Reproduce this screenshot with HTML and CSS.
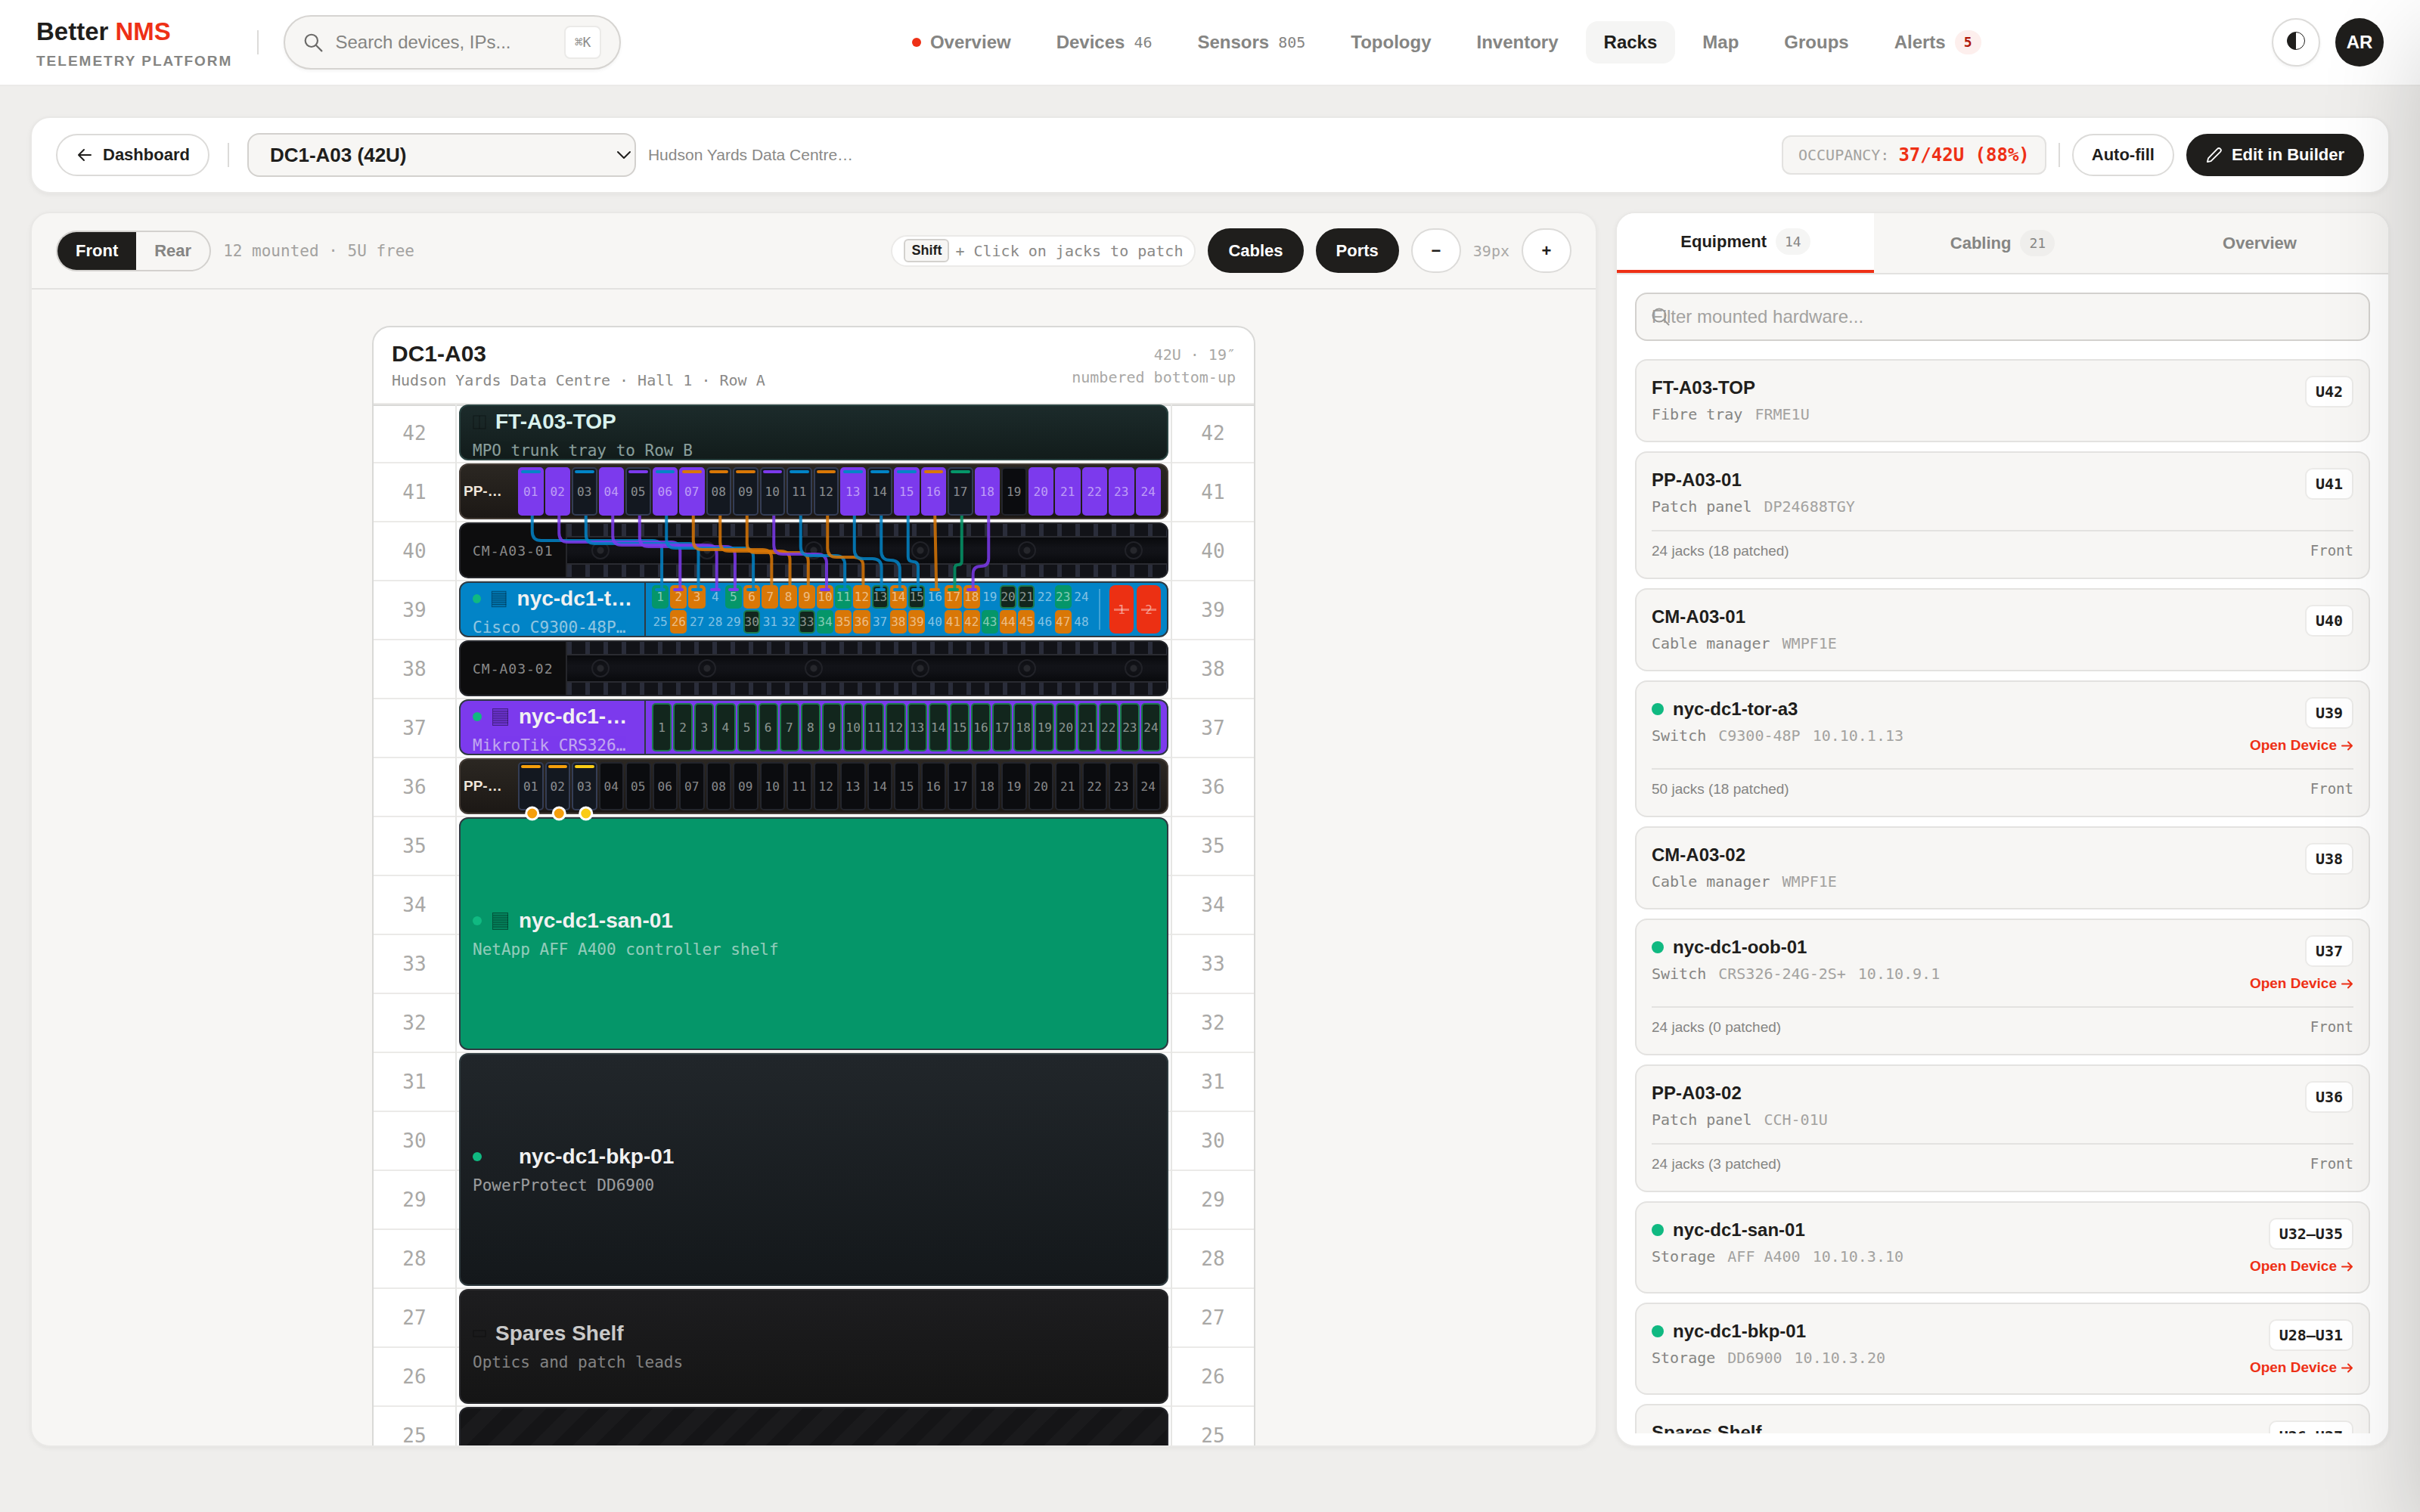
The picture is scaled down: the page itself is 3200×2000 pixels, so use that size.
FILE: index.html
```html
<!DOCTYPE html>
<html lang="en">
<head>
  <meta charset="UTF-8">
  <meta name="viewport" content="width=device-width, initial-scale=1.0">
  <title>Better NMS - Racks</title>
  <link rel="stylesheet" href="styles.css">
</head>
<body>
  <header class="topbar">
    <div class="topbar-left">
      <a class="brand" href="#">
        <span class="brand-name">Better <em>NMS</em></span>
        <span class="brand-sub">TELEMETRY PLATFORM</span>
      </a>
      <span class="divider"></span>
      <label class="search">
        <svg class="icon" viewBox="0 0 24 24"><circle cx="10" cy="10" r="7.5"/><path d="M15.5 15.5 22.5 22.5"/></svg>
        <input type="text" placeholder="Search devices, IPs..." aria-label="Search">
        <kbd>⌘K</kbd>
      </label>
    </div>

    <nav class="nav">
      <a href="#"><i class="dot-red"></i>Overview</a>
      <a href="#">Devices <span class="count">46</span></a>
      <a href="#">Sensors <span class="count">805</span></a>
      <a href="#">Topology</a>
      <a href="#">Inventory</a>
      <a href="#" class="active" aria-current="page">Racks</a>
      <a href="#">Map</a>
      <a href="#">Groups</a>
      <a href="#">Alerts <span class="alert-count">5</span></a>
    </nav>

    <div class="topbar-right">
      <button class="round" aria-label="Toggle theme">
        <svg viewBox="0 0 24 24"><circle cx="12" cy="12" r="11.500" fill="none" stroke="#1f1e1c"/><path d="M12 .5a11.500 11.500 0 0 0 0 23z" fill="#1f1e1c"/></svg>
      </button>
      <button class="avatar">AR</button>
    </div>
  </header>

  <main class="page">
    <section class="card toolbar">
      <div class="toolbar-left">
        <a class="btn" href="#">
          <svg class="icon arrow" viewBox="0 0 24 20"><path d="M20 10H4M11 3l-7 7 7 7"/></svg>
          Dashboard
        </a>
        <span class="divider"></span>
        <div class="rack-pick">
          <select aria-label="Rack">
            <option>DC1-A03 (42U)</option>
          </select>
          <svg class="icon chevron" viewBox="0 0 20 20"><path d="m2 6 8 8 8-8"/></svg>
          <span class="site">Hudson Yards Data Centre…</span>
        </div>
      </div>
      <div class="toolbar-right">
        <div class="occupancy">OCCUPANCY: <strong>37/42U (88%)</strong></div>
        <span class="divider"></span>
        <button class="btn">Auto-fill</button>
        <button class="btn dark">
          <svg class="icon pencil" viewBox="0 0 24 24"><path d="M16.5 3.2a2.9 2.9 0 0 1 4.2 4.2L7.2 20.8 2 22l1.3-5.200z"/></svg>
          Edit in Builder
        </button>
      </div>
    </section>

    <div class="columns">
      <section class="card rack-panel">
        <div class="rack-bar">
          <div class="rack-bar-left">
            <div class="segment">
              <button class="on">Front</button>
              <button>Rear</button>
            </div>
            <span class="mounted">12 mounted · 5U free</span>
          </div>
          <div class="rack-bar-right">
            <div class="hint"><kbd>Shift</kbd>+ Click on jacks to patch</div>
            <button class="btn tall dark">Cables</button>
            <button class="btn tall dark">Ports</button>
            <button class="btn tall zoom">−</button>
            <span class="zoom-size">39px</span>
            <button class="btn tall zoom">+</button>
          </div>
        </div>

        <div class="rack-scroll">
          <div class="rack">
            <div class="rack-head">
              <div>
                <h2>DC1-A03</h2>
                <p>Hudson Yards Data Centre · Hall 1 · Row A</p>
              </div>
              <p class="rack-meta">42U · 19″<br>numbered bottom-up</p>
            </div>
            <div class="rack-body">
              <div class="gutter"></div>
              <div class="slots" id="slots">
                <svg class="cables" id="cables"></svg>
              </div>
              <div class="gutter"></div>
            </div>
          </div>
        </div>
      </section>

      <aside class="card side">
        <div class="tabs">
          <button class="on">Equipment <span>14</span></button>
          <button>Cabling <span>21</span></button>
          <button>Overview</button>
        </div>
        <div class="side-body">
          <label class="filter">
            <svg class="icon" viewBox="0 0 24 24"><circle cx="10" cy="10" r="8.5"/><path d="M16.500 16.500 22.500 22.500"/></svg>
            <input type="text" placeholder="Filter mounted hardware..." aria-label="Filter mounted hardware">
          </label>
          <div class="list" id="list"></div>
        </div>
      </aside>
    </div>
  </main>

  <div class="drawer"></div>

  <script src="script.js"></script>
</body>
</html>
```
FILE: styles.css
```css
* {
  box-sizing: border-box;
}

body {
  margin: 0;
  height: 100vh;
  display: flex;
  flex-direction: column;
  overflow: hidden;
  background: #efeeec;
  color: #1f1e1c;
  font-family: "Liberation Sans", Arial, sans-serif;
  font-size: 22px;
}

button, input, select {
  font: inherit;
  color: inherit;
}

button {
  cursor: pointer;
}

a {
  color: inherit;
  text-decoration: none;
}

h2, h3, p {
  margin: 0;
}

kbd, .count, .alert-count, .occupancy, .mounted, .zoom-size, .hint,
.rack-head p, .gutter, .unit p, .port, .cm-label, .tabs span,
.item-sub, .item-u, .item-side {
  font-family: "DejaVu Sans Mono", "Liberation Mono", monospace;
}

.icon {
  fill: none;
  stroke: currentColor;
  stroke-width: 2;
  stroke-linecap: round;
  stroke-linejoin: round;
  flex: none;
}

.divider {
  width: 2px;
  height: 32px;
  background: #dcdbd9;
}

/* top bar */
.topbar {
  display: flex;
  align-items: center;
  justify-content: space-between;
  height: 114px;
  padding: 0 48px;
  background: #fff;
  border-bottom: 2px solid #ebeae8;
  flex: none;
}

.topbar-left, .topbar-right, .nav {
  display: flex;
  align-items: center;
}

.brand {
  display: flex;
  flex-direction: column;
  margin-right: 33px;
  padding-top: 4px;
}

.brand-name {
  font-size: 33px;
  font-weight: bold;
  line-height: 38px;
}

.brand-name em {
  font-style: normal;
  color: #ee3016;
}

.brand-sub {
  margin-top: 8px;
  font-size: 19px;
  font-weight: bold;
  line-height: 24px;
  letter-spacing: 2px;
  color: #858583;
}

.search {
  display: flex;
  align-items: center;
  width: 446px;
  height: 72px;
  margin-left: 33px;
  padding: 0 24px;
  background: #f7f6f4;
  border: 2px solid #d6d4d1;
  border-radius: 36px;
  box-shadow: 0 2px 4px rgba(0, 0, 0, 0.05);
}

.search .icon {
  width: 26px;
  height: 26px;
  color: #6b6a68;
}

.search input {
  flex: 1;
  min-width: 0;
  margin-left: 16px;
  padding: 0;
  border: 0;
  outline: 0;
  background: none;
  font-size: 24px;
}

.search input::placeholder {
  color: #858583;
}

.search kbd {
  padding: 0 12px;
  font-size: 18px;
  line-height: 40px;
  color: #8f8e8c;
  background: #fff;
  border: 2px solid #ebeae8;
  border-radius: 8px;
}

.nav {
  gap: 12px;
}

.nav a {
  display: flex;
  align-items: center;
  gap: 12px;
  height: 56px;
  padding: 0 24px;
  border-radius: 16px;
  font-size: 24px;
  font-weight: bold;
  color: #858583;
}

.nav a.active {
  color: #1f1e1c;
  background: #f5f5f4;
}

.dot-red {
  width: 12px;
  height: 12px;
  border-radius: 50%;
  background: #ee3016;
}

.count {
  font-size: 20px;
  font-weight: normal;
}

.alert-count {
  padding: 0 12px;
  font-size: 18px;
  line-height: 32px;
  color: #b0180a;
  background: #fdefed;
  border-radius: 16px;
}

.topbar-right {
  gap: 20px;
}

.round, .avatar {
  display: flex;
  align-items: center;
  justify-content: center;
  width: 64px;
  height: 64px;
  padding: 0;
  border-radius: 50%;
}

.round {
  padding-bottom: 4px;
  background: #fff;
  border: 2px solid #dcdbd9;
  box-shadow: 0 2px 4px rgba(0, 0, 0, 0.05);
}

.round svg {
  width: 24px;
  height: 24px;
}

.avatar {
  border: 0;
  background: #1f1e1c;
  color: #fff;
  font-size: 24px;
  font-weight: bold;
}

/* page */
.page {
  flex: 1;
  min-height: 0;
  display: flex;
  flex-direction: column;
  gap: 24px;
  padding: 40px 40px 86px;
}

.card {
  background: #fff;
  border: 2px solid #e9e8e6;
  border-radius: 26px;
  box-shadow: 0 2px 6px rgba(0, 0, 0, 0.05);
}

.toolbar {
  display: flex;
  align-items: center;
  justify-content: space-between;
  height: 102px;
  padding: 0 32px;
  flex: none;
}

.toolbar-left, .toolbar-right, .rack-pick {
  display: flex;
  align-items: center;
}

.toolbar-left {
  gap: 24px;
}

.toolbar-right, .rack-pick {
  gap: 16px;
}

.btn {
  display: flex;
  align-items: center;
  gap: 12px;
  height: 56px;
  padding: 0 24px;
  background: #fff;
  border: 2px solid #dcdbd9;
  border-radius: 30px;
  font-size: 22px;
  font-weight: bold;
}

.btn.dark {
  background: #1f1e1c;
  border-color: #1f1e1c;
  color: #fff;
}

.btn.tall {
  height: 59px;
}

.arrow {
  width: 24px;
  height: 20px;
}

.pencil {
  width: 22px;
  height: 22px;
}

.rack-pick {
  position: relative;
}

.rack-pick select {
  appearance: none;
  width: 514px;
  height: 58px;
  padding: 0 28px;
  background: #f7f6f4;
  border: 2px solid #d3d1ce;
  border-radius: 16px;
  font-size: 26px;
  font-weight: bold;
}

.chevron {
  position: absolute;
  left: 488px;
  width: 20px;
  height: 20px;
  pointer-events: none;
}

.site {
  font-size: 21px;
  color: #8a8987;
}

.occupancy {
  display: flex;
  align-items: center;
  gap: 12px;
  height: 52px;
  padding: 0 20px;
  background: #f7f6f4;
  border: 2px solid #e3e2e0;
  border-radius: 12px;
  font-size: 20px;
  color: #a3a2a0;
}

.occupancy strong {
  font-size: 24px;
  color: #ee3016;
}

.columns {
  flex: 1;
  min-height: 0;
  display: grid;
  grid-template-columns: minmax(0, 1fr) 1024px;
  gap: 24px;
}

/* rack panel */
.rack-panel {
  display: flex;
  flex-direction: column;
  min-height: 0;
  overflow: hidden;
  background: #f7f6f4;
}

.rack-bar {
  display: flex;
  align-items: center;
  justify-content: space-between;
  padding: 20px 32px;
  border-bottom: 2px solid #e3e2e0;
}

.rack-bar-left, .rack-bar-right {
  display: flex;
  align-items: center;
  gap: 16px;
}

.rack-bar .btn {
  padding: 0 25px;
}

.segment {
  display: flex;
  overflow: hidden;
  height: 54px;
  border: 2px solid #d3d1ce;
  border-radius: 27px;
}

.segment button {
  padding: 0 24px;
  border: 0;
  background: none;
  font-weight: bold;
  color: #858583;
}

.segment .on {
  background: #1f1e1c;
  color: #fff;
}

.mounted {
  font-size: 21px;
  color: #a3a2a0;
}

.hint {
  display: flex;
  align-items: center;
  gap: 8px;
  height: 42px;
  padding: 0 15px;
  background: #fff;
  border: 2px solid #ebeae8;
  border-radius: 21px;
  font-size: 20px;
  color: #8a8987;
}

.hint kbd {
  padding: 0 8px;
  background: #f7f6f4;
  border: 2px solid #d3d1ce;
  border-radius: 6px;
  font-family: "Liberation Sans", Arial, sans-serif;
  font-size: 18px;
  font-weight: bold;
  line-height: 27px;
  color: #1f1e1c;
}

.rack-bar .zoom {
  justify-content: center;
  width: 66px;
  padding: 0;
}

.zoom-size {
  font-size: 20px;
  color: #a9a8a6;
}

.rack-scroll {
  flex: 1;
  min-height: 0;
  overflow: auto;
  scrollbar-width: none;
  padding: 48px;
}

.rack {
  max-width: 1168px;
  margin: 0 auto;
  background: #fff;
  border: 2px solid #d9d9d7;
  border-radius: 24px;
}

.rack-head {
  display: flex;
  align-items: center;
  justify-content: space-between;
  padding: 19px 24px 17px;
  border-bottom: 2px solid #ebeae8;
}

.rack-head h2 {
  margin-bottom: 6px;
  font-size: 30px;
  line-height: 32px;
}

.rack-head p {
  font-size: 20px;
  line-height: 26px;
  color: #8a8987;
}

.rack-head .rack-meta {
  line-height: 30px;
  text-align: right;
  color: #a9a8a6;
}

.rack-body {
  display: grid;
  grid-template-columns: 108px minmax(0, 1fr) 108px;
  box-shadow: inset 0 2px #d9d9d7;
}

.gutter span {
  display: flex;
  align-items: center;
  justify-content: center;
  height: 78px;
  border-bottom: 2px solid #ebeae8;
  font-size: 26px;
  color: #a9a8a6;
}

.slots {
  position: relative;
  display: grid;
  grid-auto-rows: 78px;
  border: solid #e6e6e4;
  border-width: 0 2px;
  background: repeating-linear-gradient(transparent 0 76px, #ebeae8 76px 78px);
}

.cables {
  position: absolute;
  left: 0;
  top: 0;
  width: 100%;
  height: 100%;
  pointer-events: none;
  fill: none;
  stroke-width: 4;
  z-index: 1;
}

/* rack units */
.unit {
  display: flex;
  overflow: hidden;
  margin: 0 3px 4px;
  border: 2px solid #2f3a42;
  border-radius: 12px;
  color: #f1f1f1;
}

.face {
  display: flex;
  flex-direction: column;
  justify-content: safe center;
  padding: 2px 16px;
  white-space: nowrap;
}

.face h3 {
  display: flex;
  align-items: center;
  gap: 12px;
  margin-bottom: 4px;
  font-size: 28px;
  line-height: 38px;
}

.face p {
  font-size: 21px;
  line-height: 30px;
  opacity: 0.6;
}

.led {
  width: 12px;
  height: 12px;
  border-radius: 50%;
  background: #10b981;
}

.kind {
  width: 25px;
  height: 24px;
  fill: none;
  stroke: rgba(0, 0, 0, 0.4);
  stroke-width: 1;
}

.kind.small {
  width: 18px;
}

.tray {
  background: linear-gradient(#1c2b2b, #121c1b);
  border-color: #2b4442;
  color: #d9f2ee;
}

.panel {
  background: linear-gradient(#2b2722, #1c1815);
  border-color: #453d37;
}

.manager {
  background: #0d0d0e;
  border-color: #25262b;
}

.blue {
  background: #0284c7;
}

.purple {
  background: #7c3aed;
}

.green {
  background: #059669;
}

.backup {
  background: linear-gradient(#21262a, #14181b);
  border-color: #303c40;
}

.shelf {
  background: linear-gradient(#1d1d1f, #151515);
  border-color: #2a2a2d;
  color: #c9c9c9;
}

.blank {
  background: repeating-linear-gradient(135deg, #151517 0 20px, #1a1a1c 20px 40px);
  border-color: #25262b;
}

.switch .face {
  width: 245px;
  border-right: 2px solid #2f3a42;
}

.panel-label {
  display: flex;
  align-items: center;
  width: 76px;
  padding-left: 4px;
  font-size: 19px;
  font-weight: bold;
  color: #efe6dc;
}

.ports {
  flex: 1;
  display: grid;
  grid-template-columns: repeat(24, minmax(0, 1fr));
  gap: 2px;
  padding: 3px 8px 3px 0;
}

.switch .ports {
  padding-left: 8px;
}

.port {
  position: relative;
  display: flex;
  align-items: center;
  justify-content: center;
  min-width: 0;
  padding: 0;
  border: 2px solid transparent;
  border-radius: 5px;
  background: none;
  font-size: 16px;
  color: rgba(255, 255, 255, 0.52);
}

.port.empty {
  background: #0b0c0f;
  border-color: #23252c;
}

.port.patched {
  background: #131820;
  border-color: #343d55;
}

.port.up {
  background: #12261d;
  border-color: #1c7a4e;
}

.port.g {
  background: #059669;
}

.port.o {
  background: #d97706;
}

.port.p {
  background: #7c3aed;
  border-color: #7c3aed;
}

.port i {
  position: absolute;
  top: 2px;
  left: 2px;
  right: 2px;
  height: 4px;
  border-radius: 2px;
}

.uplinks {
  display: flex;
  gap: 4px;
  margin: 3px 8px 3px 4px;
}

.uplinks::before {
  content: "";
  width: 2px;
  margin: 5px 8px 5px 0;
  background: rgba(255, 255, 255, 0.25);
}

.uplinks .port {
  width: 32px;
  background: #ec3013;
  border-radius: 8px;
}

.uplinks .port::after {
  content: "";
  position: absolute;
  width: 20px;
  height: 3px;
  background: rgba(255, 255, 255, 0.35);
}

.cm-label {
  display: flex;
  align-items: center;
  width: 141px;
  padding-left: 16px;
  border-right: 2px solid #25262b;
  font-size: 18px;
  letter-spacing: 1px;
  color: #8a8a8a;
}

.cm-duct {
  flex: 1;
  display: flex;
  flex-direction: column;
}

.fingers {
  height: 16px;
  background: repeating-linear-gradient(90deg, #2a2d3a 0 6px, #121318 6px 24px);
}

.cm-mid {
  flex: 1;
  display: flex;
  align-items: center;
  justify-content: space-between;
  padding: 0 32px;
  border: solid #2a2b31;
  border-width: 2px 0;
  background: linear-gradient(#090a0d, #121318 40%, #111217 60%, #090a0d);
}

.cm-mid span {
  width: 24px;
  height: 24px;
  border: 2px solid #212228;
  border-radius: 50%;
  background: radial-gradient(circle, #26272c 4px, transparent 5px);
}

/* equipment list */
.side {
  display: flex;
  flex-direction: column;
  min-height: 0;
  overflow: hidden;
}

.tabs {
  display: grid;
  grid-template-columns: repeat(3, 1fr);
  height: 81px;
  background: #f7f6f4;
  border-bottom: 2px solid #e3e2e0;
  flex: none;
}

.tabs button {
  display: flex;
  align-items: center;
  justify-content: center;
  gap: 12px;
  border: 0;
  background: none;
  font-weight: bold;
  color: #858583;
}

.tabs .on {
  background: #fff;
  border-bottom: 4px solid #ee3016;
  color: #1f1e1c;
}

.tabs span {
  padding: 0 12px;
  background: #efeeec;
  border-radius: 18px;
  font-size: 18px;
  font-weight: normal;
  line-height: 35px;
  color: #858583;
}

.tabs .on span {
  background: #f5f5f4;
}

.side-body {
  flex: 1;
  min-height: 0;
  display: flex;
  flex-direction: column;
  gap: 24px;
  padding: 24px 24px 16px;
}

.filter {
  position: relative;
  flex: none;
}

.filter input {
  width: 100%;
  height: 64px;
  padding: 0 20px;
  background: #f7f6f4;
  border: 2px solid #d3d1ce;
  border-radius: 16px;
  font-size: 24px;
}

.filter input::placeholder {
  color: #a3a2a0;
}

.filter .icon {
  position: absolute;
  left: 22px;
  top: 20px;
  width: 24px;
  height: 24px;
  color: #9a9997;
}

.list {
  display: flex;
  flex-direction: column;
  gap: 12px;
  min-height: 0;
  overflow: hidden;
}

.item {
  flex: none;
  padding: 20px;
  background: #f7f6f4;
  border: 2px solid #e3e2e0;
  border-radius: 16px;
}

.item-top, .item-foot {
  display: flex;
  justify-content: space-between;
}

.item h3 {
  display: flex;
  align-items: center;
  gap: 12px;
  font-size: 24px;
  line-height: 32px;
}

.item h3 i {
  width: 16px;
  height: 16px;
  border-radius: 50%;
  background: #10b981;
}

.item-sub {
  display: flex;
  gap: 16px;
  margin-top: 6px;
  padding-bottom: 2px;
  font-size: 20px;
  line-height: 26px;
  color: #a3a2a0;
}

.item-sub span:first-child {
  color: #858583;
}

.item-right {
  display: flex;
  flex-direction: column;
  align-items: flex-end;
  gap: 8px;
}

.item-u {
  padding: 0 12px;
  background: #fff;
  border: 2px solid #ebeae8;
  border-radius: 10px;
  font-size: 20px;
  font-weight: bold;
  line-height: 38px;
}

.open {
  display: flex;
  align-items: center;
  gap: 5px;
  font-size: 19px;
  font-weight: bold;
  line-height: 28px;
  color: #ee3016;
}

.open svg {
  width: 17px;
  height: 17px;
}

.item-foot {
  margin-top: 16px;
  padding: 11px 0 1px;
  border-top: 2px solid #e3e2e0;
  font-size: 19px;
  line-height: 29px;
  color: #858583;
}

.drawer {
  position: fixed;
  top: 0;
  left: 100%;
  width: 800px;
  height: 100vh;
  pointer-events: none;
  box-shadow: 0 48px 120px rgba(0, 0, 0, 0.18);
}
```
FILE: script.js
```js
const TOP_U = 42;
const LAST_U = 25;
const BLUE = "#0284c7", PURPLE = "#7c3aed", ORANGE = "#d97706", GREEN = "#059669";

// cable i runs from patch panel jack i+1 to switch port i+1
const cableColors = [BLUE, PURPLE, BLUE, PURPLE, PURPLE, BLUE, ORANGE, ORANGE, ORANGE,
  PURPLE, BLUE, ORANGE, BLUE, BLUE, BLUE, ORANGE, GREEN, PURPLE];
const strayColors = ["#f59e0b", "#f59e0b", "#facc15"];

// one letter per port: p/o/g = vlan colour, u = link up, x = patched, e = empty, . = none
const panel1 = "ppxpxppxxxxxpxppxpeppppp";
const panel2 = "xxx" + "e".repeat(21);
const torPorts = "goo.gooooogouou.oo.uu.g." + ".o...u..ugoo.oo.oogoo.o.";
const oobPorts = "u".repeat(24);
const portClass = { p: "p", o: "o", g: "g", u: "up", x: "patched", e: "empty", ".": "" };

const serverIcon = '<svg class="kind" viewBox="0 0 25 24"><rect x="2.500" y="1.500" width="20" height="22" fill="rgba(0,0,0,.12)"/><path d="M3 5h20M3 8h20M3 11h20M3 14h20M3 17h20M3 20h20"/></svg>';
const trayIcon = '<svg class="kind small" viewBox="0 0 18 24"><rect x="1" y="4" width="16" height="17"/><path d="M9 4v17"/></svg>';
const shelfIcon = '<svg class="kind small" viewBox="0 0 18 24"><rect x="1" y="8" width="16" height="8"/></svg>';
const hiddenIcon = '<svg class="kind" viewBox="0 0 25 24"></svg>';
const led = '<i class="led"></i>';

function ports(spec, ticks, pad) {
  let html = "";
  for (let i = 0; i < spec.length; i++) {
    const label = String(i + 1).padStart(pad, "0");
    const tick = ticks[i] ? `<i style="background:${ticks[i]}"></i>` : "";
    html += `<button class="port ${portClass[spec[i]]}">${tick}${label}</button>`;
  }
  return `<div class="ports">${html}</div>`;
}

function face(icons, name, sub) {
  return `<div class="face"><h3>${icons}${name}</h3><p>${sub}</p></div>`;
}

function manager(name) {
  return `<div class="cm-label">${name}</div><div class="cm-duct"><div class="fingers"></div>
    <div class="cm-mid">${"<span></span>".repeat(6)}</div><div class="fingers"></div></div>`;
}

const units = [
  { top: 42, size: 1, cls: "tray", html: face(trayIcon, "FT-A03-TOP", "MPO trunk tray to Row B") },
  { top: 41, size: 1, cls: "panel", id: "panel1", html: '<div class="panel-label">PP-…</div>' + ports(panel1, cableColors, 2) },
  { top: 40, size: 1, cls: "manager", html: manager("CM-A03-01") },
  { top: 39, size: 1, cls: "switch blue", id: "tor", html: face(led + serverIcon, "nyc-dc1-t…", "Cisco C9300-48P…") + ports(torPorts, cableColors, 1) +
    '<div class="uplinks"><button class="port">1</button><button class="port">2</button></div>' },
  { top: 38, size: 1, cls: "manager", html: manager("CM-A03-02") },
  { top: 37, size: 1, cls: "switch purple", html: face(led + serverIcon, "nyc-dc1-…", "MikroTik CRS326…") + ports(oobPorts, [], 1) },
  { top: 36, size: 1, cls: "panel", id: "panel2", html: '<div class="panel-label">PP-…</div>' + ports(panel2, strayColors, 2) },
  { top: 35, size: 4, cls: "green", html: face(led + serverIcon, "nyc-dc1-san-01", "NetApp AFF A400 controller shelf") },
  { top: 31, size: 4, cls: "backup", html: face(led + hiddenIcon, "nyc-dc1-bkp-01", "PowerProtect DD6900") },
  { top: 27, size: 2, cls: "shelf", html: face(shelfIcon, "Spares Shelf", "Optics and patch leads") },
  { top: 25, size: 1, cls: "blank", html: "" }
];

const slots = document.getElementById("slots");
units.forEach(u => {
  const el = document.createElement("div");
  el.className = "unit " + u.cls;
  if (u.id) el.id = u.id;
  el.style.gridRow = `${TOP_U - u.top + 1} / span ${u.size}`;
  el.innerHTML = u.html;
  slots.appendChild(el);
});

document.querySelectorAll(".gutter").forEach(g => {
  for (let n = TOP_U; n >= LAST_U; n--) g.innerHTML += `<span>${n}</span>`;
});

function drawCables() {
  const box = slots.getBoundingClientRect();
  const jacks = id => [...document.querySelectorAll(`#${id} .ports .port`)].map(p => {
    const r = p.getBoundingClientRect();
    return { x: r.left + r.width / 2 - box.left, top: r.top - box.top, bottom: r.bottom - box.top };
  });
  const from = jacks("panel1"), to = jacks("tor");
  let svg = "";
  cableColors.forEach((color, i) => {
    const x1 = from[i].x, y1 = from[i].bottom, x2 = to[i].x, y2 = to[i].top + 4;
    const mid = y1 + 33 + i * 2;
    const dx = x2 - x1;
    const r = Math.min(12, Math.abs(dx) / 2);
    const s = Math.sign(dx);
    const d = Math.abs(dx) < 4
      ? `M${x1} ${y1}L${x2} ${y2}`
      : `M${x1} ${y1}V${mid - r}Q${x1} ${mid} ${x1 + s * r} ${mid}H${x2 - s * r}Q${x2} ${mid} ${x2} ${mid + r}V${y2}`;
    svg += `<path d="${d}" stroke="${color}" stroke-opacity="0.85"/>`;
  });
  // jacks patched to another rack end in a dot
  jacks("panel2").slice(0, strayColors.length).forEach((j, i) => {
    svg += `<circle cx="${j.x}" cy="${j.bottom + 4}" r="8" fill="${strayColors[i]}" stroke="#fff" stroke-width="3"/>`;
  });
  document.getElementById("cables").innerHTML = svg;
}
drawCables();
window.addEventListener("resize", drawCables);

const items = [
  { name: "FT-A03-TOP", sub: ["Fibre tray", "FRME1U"], u: "U42" },
  { name: "PP-A03-01", sub: ["Patch panel", "DP24688TGY"], u: "U41", jacks: "24 jacks (18 patched)" },
  { name: "CM-A03-01", sub: ["Cable manager", "WMPF1E"], u: "U40" },
  { name: "nyc-dc1-tor-a3", sub: ["Switch", "C9300-48P", "10.10.1.13"], u: "U39", device: true, jacks: "50 jacks (18 patched)" },
  { name: "CM-A03-02", sub: ["Cable manager", "WMPF1E"], u: "U38" },
  { name: "nyc-dc1-oob-01", sub: ["Switch", "CRS326-24G-2S+", "10.10.9.1"], u: "U37", device: true, jacks: "24 jacks (0 patched)" },
  { name: "PP-A03-02", sub: ["Patch panel", "CCH-01U"], u: "U36", jacks: "24 jacks (3 patched)" },
  { name: "nyc-dc1-san-01", sub: ["Storage", "AFF A400", "10.10.3.10"], u: "U32–U35", device: true },
  { name: "nyc-dc1-bkp-01", sub: ["Storage", "DD6900", "10.10.3.20"], u: "U28–U31", device: true },
  { name: "Spares Shelf", sub: [], u: "U26–U27" }
];

const openLink = '<a class="open" href="#">Open Device <svg class="icon" viewBox="0 0 17 17"><path d="M2 8.500h13M10 3.500l5 5-5 5"/></svg></a>';

document.getElementById("list").innerHTML = items.map(it => `
  <article class="item">
    <div class="item-top">
      <div>
        <h3>${it.device ? "<i></i>" : ""}${it.name}</h3>
        <div class="item-sub">${it.sub.map(s => `<span>${s}</span>`).join("")}</div>
      </div>
      <div class="item-right"><span class="item-u">${it.u}</span>${it.device ? openLink : ""}</div>
    </div>
    ${it.jacks ? `<div class="item-foot"><span>${it.jacks}</span><span class="item-side">Front</span></div>` : ""}
  </article>`).join("");
```
